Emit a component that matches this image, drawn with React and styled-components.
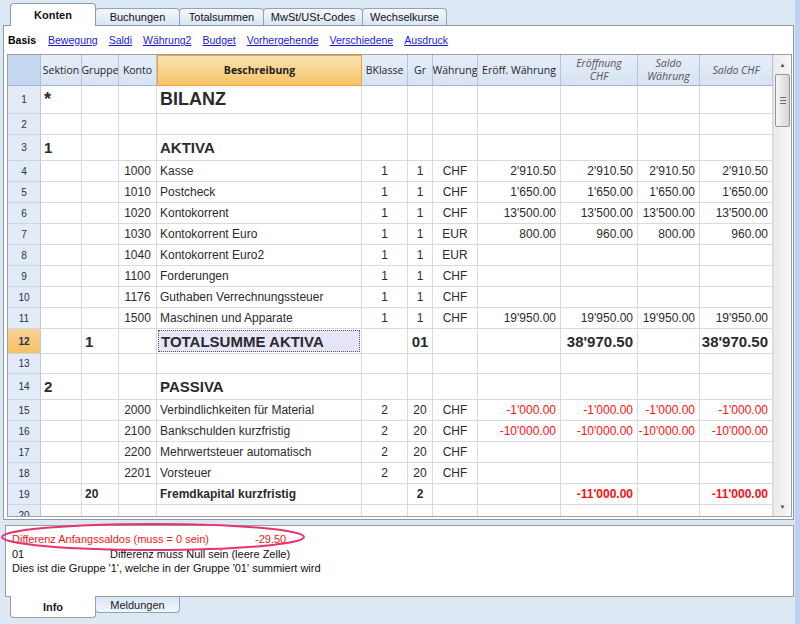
import React from "react";
import styled, { createGlobalStyle, css } from "styled-components";

const GlobalStyle = createGlobalStyle`
  html, body {
    margin: 0;
    padding: 0;
    background: #dde8f5;
    overflow: hidden;
  }
  * { box-sizing: border-box; }
`;

const UI = `"Liberation Sans", Arial, sans-serif`;
const HEAD = `"Open Sans", "Noto Sans", sans-serif`;

const columns = [
  { key: "n", w: 33 },
  { key: "sek", w: 41, align: "left", title: "Sektion" },
  { key: "grp", w: 37, align: "left", title: "Gruppe" },
  { key: "kto", w: 38, align: "center", title: "Konto" },
  { key: "desc", w: 205, align: "left", title: "Beschreibung", accent: true },
  { key: "bk", w: 46, align: "center", title: "BKlasse" },
  { key: "gr", w: 25, align: "center", title: "Gr" },
  { key: "wa", w: 45, align: "center", title: "Währung" },
  { key: "ew", w: 83, align: "right", title: "Eröff. Währung" },
  { key: "ec", w: 77, align: "right", title: ["Eröffnung", "CHF"], italic: true },
  { key: "sw", w: 62, align: "right", title: ["Saldo", "Währung"], italic: true },
  { key: "sc", w: 73, align: "right", title: "Saldo CHF", italic: true },
];

const template = columns.map((c) => `${c.w}px`).join(" ");

const four = (v) => ({ ew: v, ec: v, sw: v, sc: v });

const rows = [
  { n: 1, h: 28, size: "xl", sek: "*", desc: "BILANZ" },
  { n: 2, h: 21 },
  { n: 3, h: 26, size: "lg", sek: "1", desc: "AKTIVA" },
  { n: 4, kto: "1000", desc: "Kasse", bk: "1", gr: "1", wa: "CHF", ...four("2'910.50") },
  { n: 5, kto: "1010", desc: "Postcheck", bk: "1", gr: "1", wa: "CHF", ...four("1'650.00") },
  { n: 6, kto: "1020", desc: "Kontokorrent", bk: "1", gr: "1", wa: "CHF", ...four("13'500.00") },
  { n: 7, kto: "1030", desc: "Kontokorrent Euro", bk: "1", gr: "1", wa: "EUR", ew: "800.00", ec: "960.00", sw: "800.00", sc: "960.00" },
  { n: 8, kto: "1040", desc: "Kontokorrent Euro2", bk: "1", gr: "1", wa: "EUR" },
  { n: 9, kto: "1100", desc: "Forderungen", bk: "1", gr: "1", wa: "CHF" },
  { n: 10, kto: "1176", desc: "Guthaben Verrechnungssteuer", bk: "1", gr: "1", wa: "CHF" },
  { n: 11, kto: "1500", desc: "Maschinen und Apparate", bk: "1", gr: "1", wa: "CHF", ...four("19'950.00") },
  { n: 12, h: 25, size: "lg", current: true, grp: "1", desc: "TOTALSUMME AKTIVA", gr: "01", ec: "38'970.50", sc: "38'970.50" },
  { n: 13, h: 20 },
  { n: 14, h: 26, size: "lg", sek: "2", desc: "PASSIVA" },
  { n: 15, red: true, kto: "2000", desc: "Verbindlichkeiten für Material", bk: "2", gr: "20", wa: "CHF", ...four("-1'000.00") },
  { n: 16, red: true, kto: "2100", desc: "Bankschulden kurzfristig", bk: "2", gr: "20", wa: "CHF", ...four("-10'000.00") },
  { n: 17, kto: "2200", desc: "Mehrwertsteuer automatisch", bk: "2", gr: "20", wa: "CHF" },
  { n: 18, kto: "2201", desc: "Vorsteuer", bk: "2", gr: "20", wa: "CHF" },
  { n: 19, size: "b", red: true, grp: "20", desc: "Fremdkapital kurzfristig", gr: "2", ec: "-11'000.00", sc: "-11'000.00" },
  { n: 20 },
];

const numericKeys = ["ew", "ec", "sw", "sc"];

const topTabs = [
  { label: "Konten", w: 86, active: true },
  { label: "Buchungen", w: 85 },
  { label: "Totalsummen", w: 85 },
  { label: "MwSt/USt-Codes", w: 100 },
  { label: "Wechselkurse", w: 85 },
];

const links = ["Bewegung", "Saldi", "Währung2", "Budget", "Vorhergehende", "Verschiedene", "Ausdruck"];

const Screen = styled.div`
  position: relative;
  width: 800px;
  height: 624px;
  border-right: 5px solid #bcd2ee;
  display: flex;
  flex-direction: column;
  font-family: ${UI};
  color: #1a1a1a;
`;

const TabBar = styled.div`
  height: 25px;
  display: flex;
  align-items: flex-end;
  padding-left: 10px;
`;

const TopTab = styled.div`
  position: relative;
  width: ${(p) => p.$w}px;
  height: ${(p) => (p.$active ? 23 : 17)}px;
  margin-bottom: ${(p) => (p.$active ? -1 : 0)}px;
  z-index: ${(p) => (p.$active ? 2 : 1)};
  display: flex;
  align-items: center;
  justify-content: center;
  font-size: 11px;
  font-weight: ${(p) => (p.$active ? 700 : 400)};
  color: #111;
  border: 1px solid ${(p) => (p.$active ? "#8d99a8" : "#8fa4c2")};
  border-bottom: none;
  border-radius: 4px 4px 0 0;
  background: ${(p) =>
    p.$active ? "#ffffff" : "linear-gradient(#f4f8fd, #d9e5f4)"};
  & + & {
    margin-left: -1px;
  }
`;

const MainPanel = styled.div`
  width: 791px;
  height: 495px;
  margin-left: 3px;
  background: #ffffff;
  border: 1px solid #8d99a8;
  display: flex;
  flex-direction: column;
`;

const SubTabs = styled.div`
  height: 28px;
  display: flex;
  align-items: center;
  gap: 11px;
  padding-left: 4px;
  font-size: 10.5px;
`;

const SubCurrent = styled.span`
  font-weight: 700;
  color: #000;
  margin-right: 1px;
`;

const SubLink = styled.a`
  color: #1a1ad6;
  text-decoration: underline;
  cursor: pointer;
`;

const GridFrame = styled.div`
  width: 785px;
  height: 463px;
  margin-left: 3px;
  border: 1px solid #a0a0a0;
  display: flex;
`;

const GridArea = styled.div`
  width: 765px;
  height: 461px;
  overflow: hidden;
`;

const HeaderRow = styled.div`
  display: grid;
  grid-template-columns: ${template};
  height: 31px;
`;

const HeaderCell = styled.div`
  display: flex;
  flex-direction: column;
  align-items: center;
  justify-content: center;
  overflow: hidden;
  white-space: nowrap;
  font-family: ${HEAD};
  font-size: 10.5px;
  line-height: 13px;
  color: #1f1f1f;
  background: linear-gradient(#e6eef9, #d7e3f3);
  border-right: 1px solid #b3c6dd;
  border-bottom: 1px solid #9fb4cf;
  ${(p) =>
    p.$italic &&
    css`
      font-style: italic;
      color: #555;
    `}
  ${(p) =>
    p.$accent &&
    css`
      font-weight: 700;
      color: #222;
      background: linear-gradient(#fbe3b0, #f6c467);
      border: 1px solid #efa53a;
    `}
  ${(p) =>
    p.$corner &&
    css`
      background: #c4d7f0;
      border-right: 1px solid #a9bfdc;
    `}
`;

const Row = styled.div`
  display: grid;
  grid-template-columns: ${template};
  height: ${(p) => p.$h}px;
`;

const sizes = {
  xl: css`font-size: 18px; font-weight: 700;`,
  lg: css`font-size: 15px; font-weight: 700;`,
  b: css`font-size: 12px; font-weight: 700;`,
  normal: css`font-size: 12px; font-weight: 400;`,
};

const Cell = styled.div`
  display: flex;
  align-items: center;
  justify-content: ${(p) =>
    p.$align === "right" ? "flex-end" : p.$align === "center" ? "center" : "flex-start"};
  padding: 0 ${(p) => (p.$align === "right" ? 4 : 3)}px;
  overflow: hidden;
  white-space: nowrap;
  background: #ffffff;
  border-right: 1px solid #dadada;
  border-bottom: 1px solid #dadada;
  color: ${(p) => (p.$red ? "#ff1010" : "#2b2b2b")};
  ${(p) => sizes[p.$size]}
`;

const SelectedText = styled.div`
  flex: 1;
  align-self: stretch;
  margin: 1px -2px 1px -2px;
  padding: 0 2px;
  display: flex;
  align-items: center;
  background: #e6e6f8;
  border: 1px dotted #555;
`;

const RowNumber = styled.div`
  display: flex;
  align-items: center;
  justify-content: center;
  font-size: 10px;
  color: #1f3252;
  background: ${(p) => (p.$current ? "linear-gradient(#fad493, #f6c066)" : "#e3ebf7")};
  font-weight: ${(p) => (p.$current ? 700 : 400)};
  border-right: 1px solid #b7c9e0;
  border-bottom: 1px solid #c9d7ea;
`;

const ScrollBar = styled.div`
  width: 18px;
  display: flex;
  flex-direction: column;
  align-items: center;
  background: linear-gradient(90deg, #ebebeb, #f7f7f7);
  border-left: 1px solid #e2e2e2;
`;

const ArrowButton = styled.div`
  width: 100%;
  height: 19px;
  display: flex;
  align-items: center;
  justify-content: center;
  font-size: 6px;
  color: #4a4a4a;
`;

const Thumb = styled.div`
  width: 15px;
  height: 53px;
  border: 1px solid #979797;
  border-radius: 2px;
  background: linear-gradient(90deg, #f6f6f6, #e2e2e2 60%, #d4d4d4);
  display: flex;
  flex-direction: column;
  align-items: center;
  justify-content: center;
  gap: 2px;
`;

const Grip = styled.span`
  width: 6px;
  height: 1px;
  background: #6e6e6e;
`;

const TrackSpace = styled.div`
  flex: 1;
`;

const InfoPanel = styled.div`
  width: 789px;
  height: 72px;
  margin: 5px 0 0 5px;
  padding: 6px 6px 0;
  background: #ffffff;
  border: 1px solid #9a9a9a;
  font-size: 11px;
  line-height: 14.5px;
`;

const InfoLine = styled.div`
  display: flex;
  white-space: nowrap;
  color: ${(p) => (p.$red ? "#f01818" : "#111")};
`;

const InfoLabel = styled.span`
  width: ${(p) => p.$w}px;
  flex: 0 0 auto;
`;

const BottomBar = styled.div`
  display: flex;
  align-items: flex-start;
  padding-left: 10px;
`;

const BottomTab = styled.div`
  position: relative;
  width: ${(p) => p.$w}px;
  height: ${(p) => (p.$active ? 22 : 16)}px;
  margin-top: ${(p) => (p.$active ? -1 : 0)}px;
  display: flex;
  align-items: center;
  justify-content: center;
  font-size: 11px;
  font-weight: ${(p) => (p.$active ? 700 : 400)};
  border: 1px solid ${(p) => (p.$active ? "#9a9a9a" : "#8fa4c2")};
  border-top: none;
  border-radius: 0 0 4px 4px;
  background: ${(p) => (p.$active ? "#ffffff" : "linear-gradient(#d9e5f4, #f1f6fc)")};
  & + & {
    margin-left: -1px;
  }
`;

const Highlight = styled.svg`
  position: absolute;
  left: 0;
  top: 522px;
  pointer-events: none;
`;

function DataRow({ row }) {
  const size = row.size || "normal";
  return (
    <Row $h={row.h || 21}>
      <RowNumber $current={row.current}>{row.n}</RowNumber>
      {columns.slice(1).map((c) => {
        const value = row[c.key];
        const red = row.red && numericKeys.includes(c.key);
        return (
          <Cell key={c.key} $align={c.align} $size={size} $red={red}>
            {row.current && c.key === "desc" ? (
              <SelectedText>{value}</SelectedText>
            ) : (
              value
            )}
          </Cell>
        );
      })}
    </Row>
  );
}

export default function App() {
  return (
    <Screen>
      <GlobalStyle />
      <TabBar>
        {topTabs.map((t) => (
          <TopTab key={t.label} $w={t.w} $active={t.active}>
            {t.label}
          </TopTab>
        ))}
      </TabBar>

      <MainPanel>
        <SubTabs>
          <SubCurrent>Basis</SubCurrent>
          {links.map((l) => (
            <SubLink key={l}>{l}</SubLink>
          ))}
        </SubTabs>

        <GridFrame>
          <GridArea>
            <HeaderRow>
              <HeaderCell $corner />
              {columns.slice(1).map((c) => (
                <HeaderCell key={c.key} $italic={c.italic} $accent={c.accent}>
                  {Array.isArray(c.title)
                    ? c.title.map((t) => <span key={t}>{t}</span>)
                    : c.title}
                </HeaderCell>
              ))}
            </HeaderRow>
            {rows.map((r) => (
              <DataRow key={r.n} row={r} />
            ))}
          </GridArea>
          <ScrollBar>
            <ArrowButton>▲</ArrowButton>
            <Thumb>
              <Grip />
              <Grip />
              <Grip />
            </Thumb>
            <TrackSpace />
            <ArrowButton>▼</ArrowButton>
          </ScrollBar>
        </GridFrame>
      </MainPanel>

      <InfoPanel>
        <InfoLine $red>
          <InfoLabel $w={243}>Differenz Anfangssaldos (muss = 0 sein)</InfoLabel>
          <span>-29.50</span>
        </InfoLine>
        <InfoLine>
          <InfoLabel $w={98}>01</InfoLabel>
          <span>Differenz muss Null sein (leere Zelle)</span>
        </InfoLine>
        <InfoLine>Dies ist die Gruppe '1', welche in der Gruppe '01' summiert wird</InfoLine>
      </InfoPanel>

      <BottomBar>
        <BottomTab $w={86} $active>
          Info
        </BottomTab>
        <BottomTab $w={85}>Meldungen</BottomTab>
      </BottomBar>

      <Highlight width="308" height="30" viewBox="0 0 308 30">
        <ellipse cx="153" cy="15" rx="151" ry="13" fill="none" stroke="#e8336d" strokeWidth="2" />
      </Highlight>
    </Screen>
  );
}
